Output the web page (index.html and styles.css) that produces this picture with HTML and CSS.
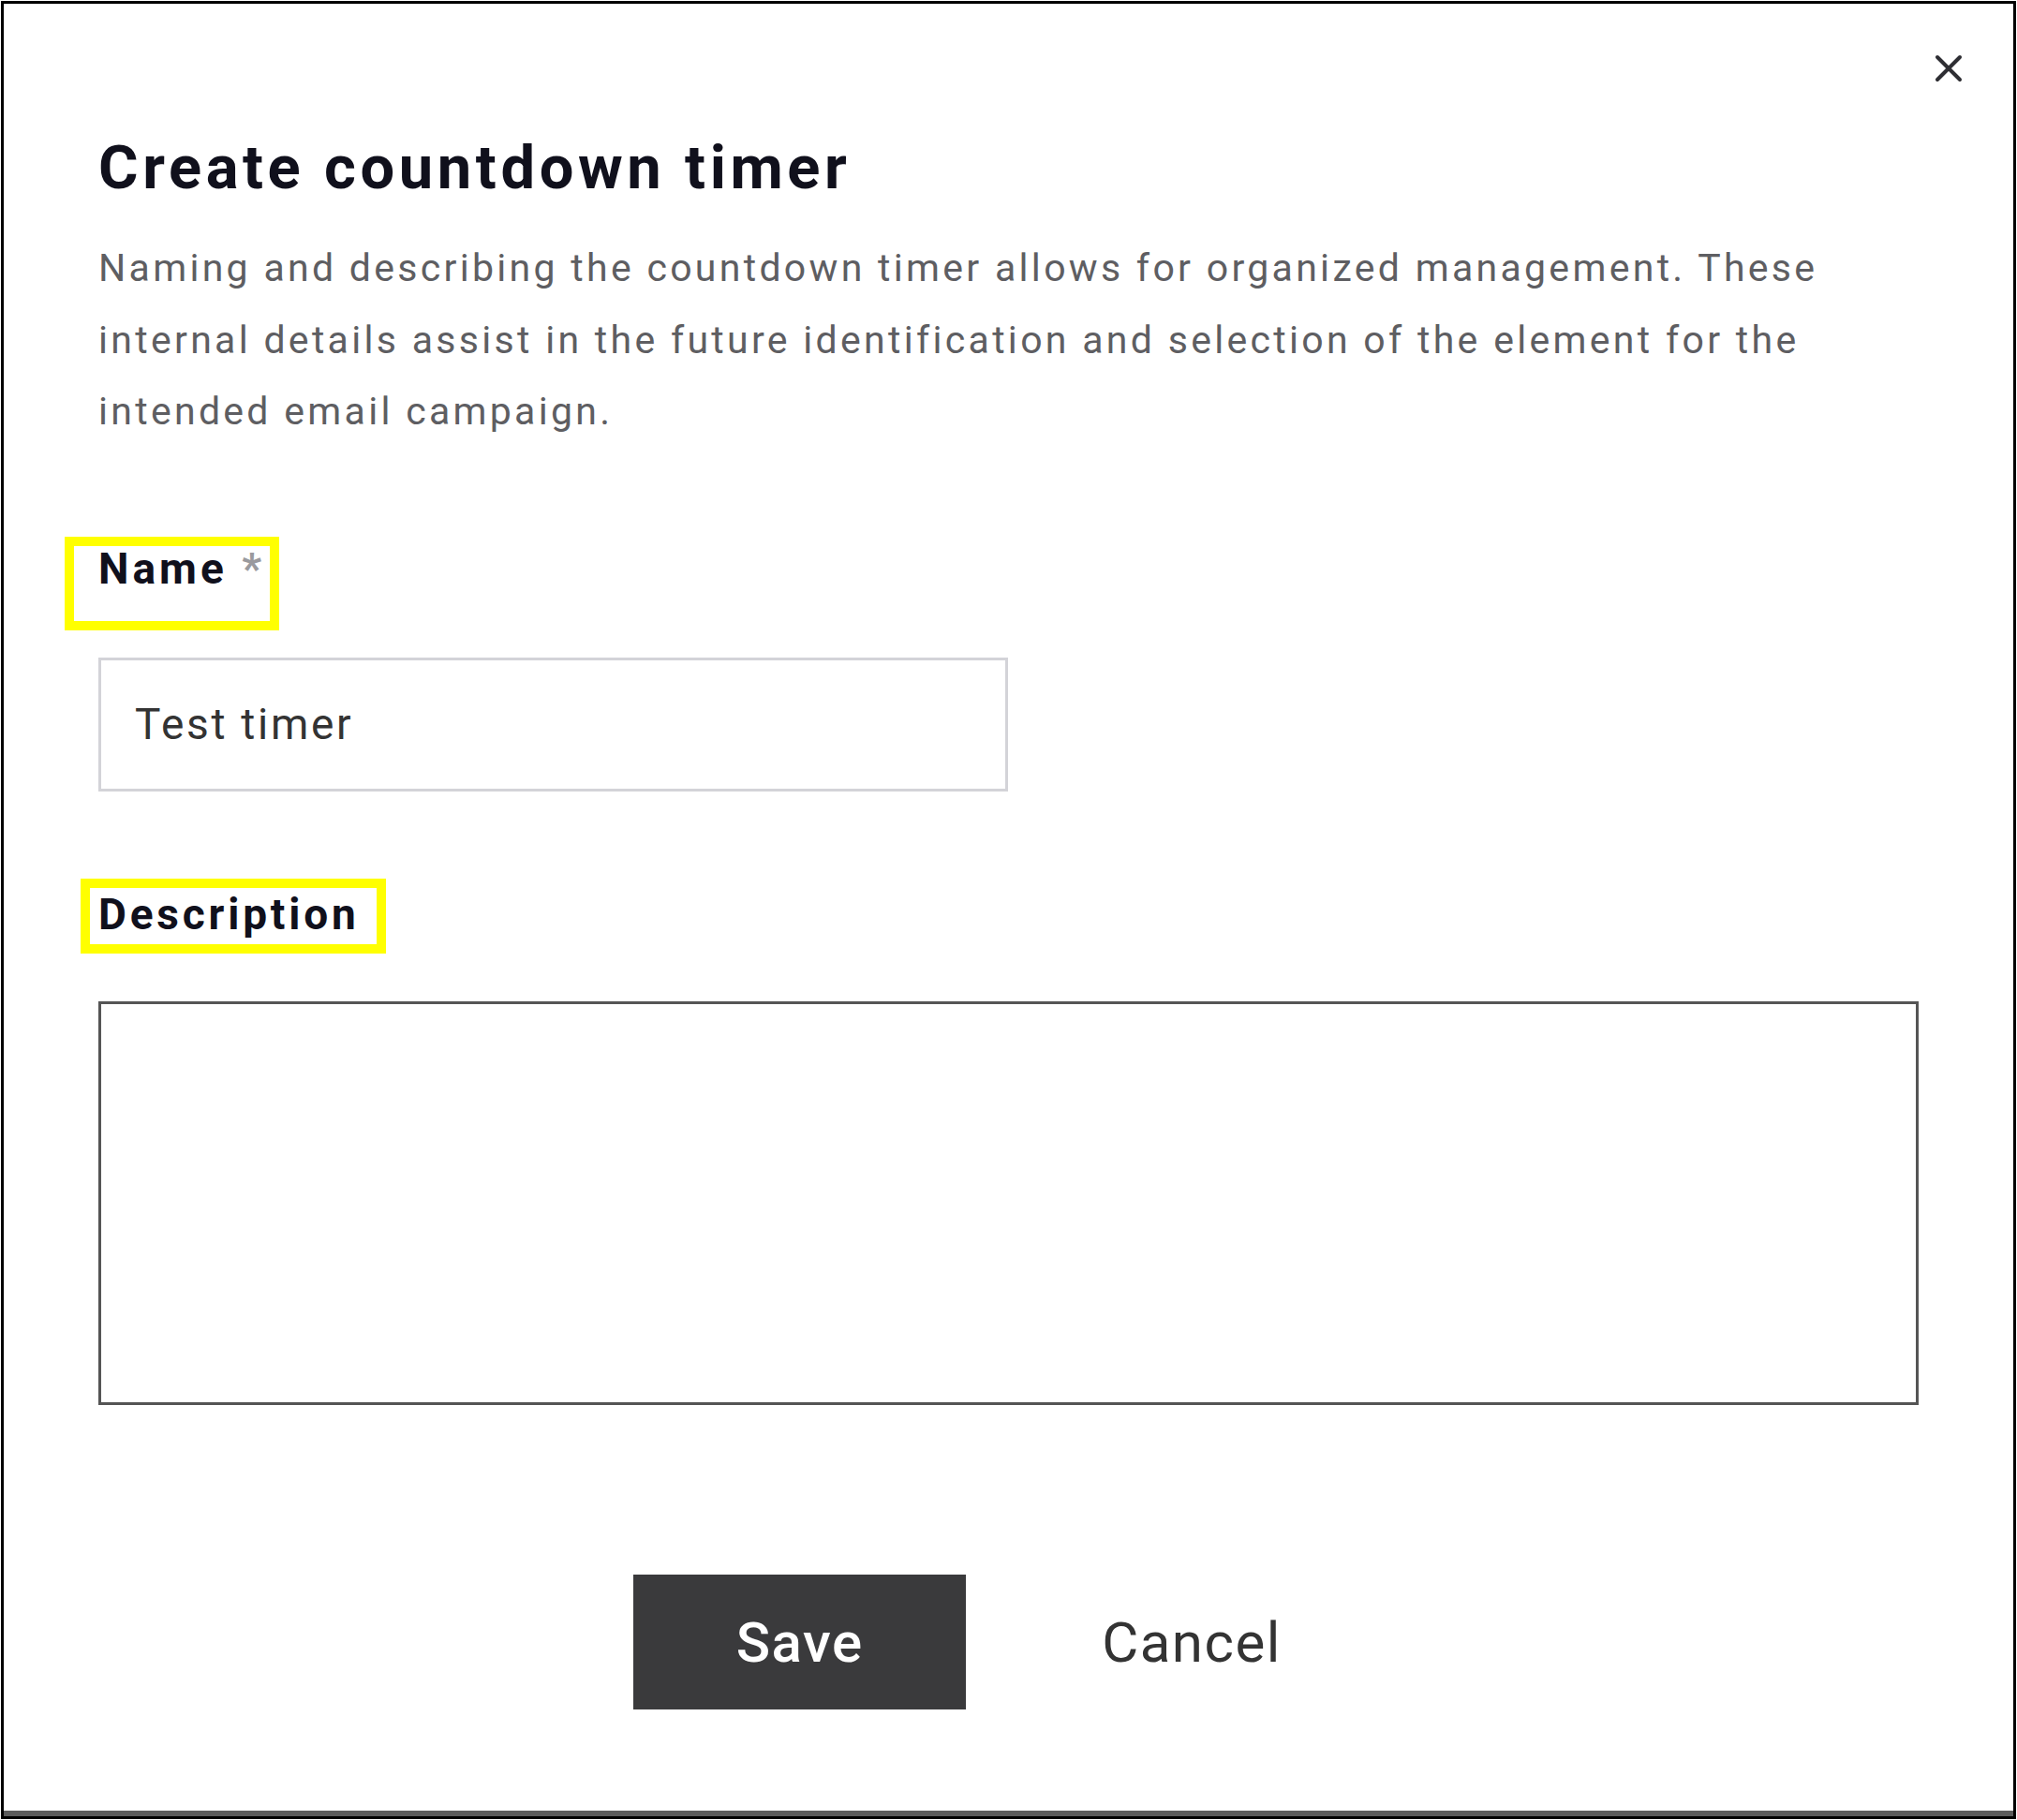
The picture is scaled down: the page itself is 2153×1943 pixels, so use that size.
FILE: index.html
```html
<!DOCTYPE html>
<html lang="en">
<head>
  <meta charset="UTF-8">
  <title>Create countdown timer</title>
  <link rel="stylesheet" href="styles.css">
</head>
<body>

  <div class="dialog">
    <button class="close" aria-label="Close">
      <svg viewBox="0 0 30 30" width="30" height="30"><path d="M3 3 L27 27 M27 3 L3 27"/></svg>
    </button>

    <h1>Create countdown timer</h1>
    <p class="intro">Naming and describing the countdown timer allows for organized management. These internal details assist in the future identification and selection of the element for the intended email campaign.</p>

    <!-- Name -->
    <div class="field field-name">
      <label class="field-label" for="timerName"><span class="mark mark-name">Name <span class="req">*</span></span></label>
      <input type="text" id="timerName" value="Test timer">
    </div>

    <!-- Description -->
    <div class="field field-desc">
      <label class="field-label" for="timerDesc"><span class="mark mark-desc">Description</span></label>
      <textarea id="timerDesc"></textarea>
    </div>

    <div class="actions">
      <button class="btn-save">Save</button>
      <button class="btn-cancel">Cancel</button>
    </div>
  </div>

</body>
</html>
```

FILE: styles.css
```css
body {
  margin: 0;
  background: white;
  font-family: Roboto, "Liberation Sans", sans-serif;
}

.dialog {
  position: relative;
  box-sizing: border-box;
  width: 2151px;
  height: 1941px;
  margin: 1px 0 0 1px;
  padding: 136px 101px 0 101px;
  border: 3px solid black;
  box-shadow: inset 0 -6px 0 #5c5c5c;
  background: white;
}

.close {
  position: absolute;
  top: 54px;
  right: 54px;
  padding: 0;
  border: none;
  background: none;
  cursor: pointer;
}

.close svg {
  display: block;
  stroke: #2e2e33;
  stroke-width: 4;
  stroke-linecap: round;
}

h1 {
  margin: 0;
  font-size: 65px;
  line-height: 78px;
  font-weight: 700;
  letter-spacing: 4.6px;
  color: #10101c;
}

.intro {
  margin: 30px 0 0;
  font-size: 41px;
  line-height: 76.5px;
  letter-spacing: 3.3px;
  color: #5e5e62;
}

.field-name {
  margin-top: 95px;
}

.field-desc {
  margin-top: 93.5px;
}

.field-label {
  display: flex;
  font-size: 46px;
  line-height: 46px;
  font-weight: 700;
  letter-spacing: 4px;
  color: #10101c;
}

/* yellow highlight round the labels */
.mark {
  border: 10px solid #ffff00;
}

.mark-name {
  margin-left: -36px;
  padding: 1px 5px 33px 26px;
}

.mark-desc {
  margin-left: -19px;
  padding: 5px 18px 9px 9px;
  letter-spacing: 3.8px;
}

.req {
  color: #9a9a9e;
}

input {
  display: block;
  box-sizing: border-box;
  width: 971px;
  height: 143px;
  margin-top: 29px;
  padding: 0 36px;
  border: 3px solid #d3d3d8;
  font-family: inherit;
  font-size: 46px;
  letter-spacing: 2.7px;
  color: #333;
  outline: none;
}

textarea {
  display: block;
  box-sizing: border-box;
  width: 100%;
  height: 431px;
  margin-top: 51px;
  border: 3px solid #555;
  resize: none;
  outline: none;
  font-family: inherit;
  font-size: 46px;
}

.actions {
  display: flex;
  justify-content: center;
  gap: 28px;
  margin-top: 181px;
}

.actions button {
  height: 144px;
  border: none;
  font-family: inherit;
  font-size: 60px;
  letter-spacing: 1.5px;
  cursor: pointer;
}

.btn-save {
  width: 355px;
  background-color: #3a3a3c;
  color: white;
  font-weight: 500;
}

.btn-cancel {
  padding: 0 109px 0 117px;
  background: none;
  color: #333;
  letter-spacing: 2.3px;
}
```
